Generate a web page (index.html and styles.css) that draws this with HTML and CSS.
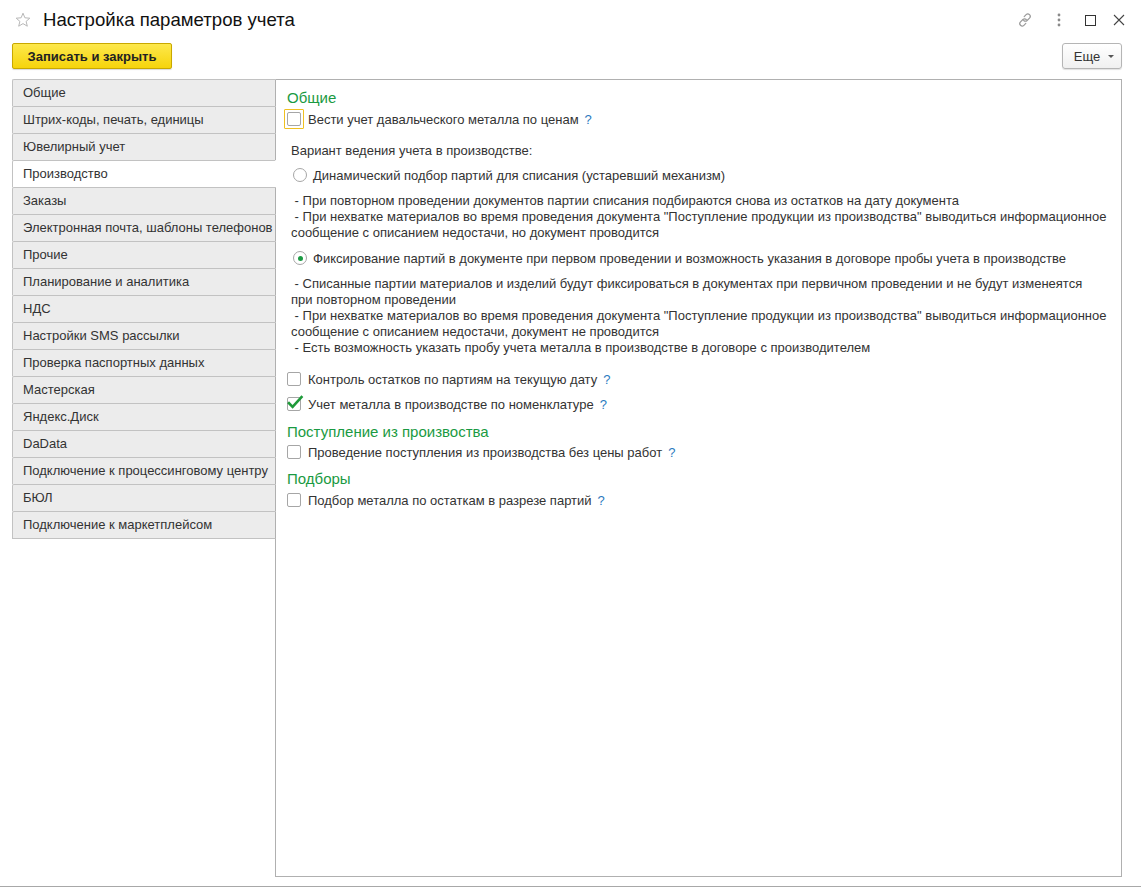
FILE: index.html
```html
<!DOCTYPE html>
<html lang="ru">
<head>
<meta charset="utf-8">
<title>Настройка параметров учета</title>
<link rel="stylesheet" href="styles.css">
</head>
<body>
<div class="window">
  <header class="titlebar">
    <svg class="star" width="16" height="16" viewBox="0 0 16 16"><path d="M8 1.2l1.9 4.6 4.9.4-3.7 3.2 1.2 4.8L8 11.6l-4.3 2.6 1.2-4.8L1.2 6.2l4.9-.4z" fill="none" stroke="#b8b8b8" stroke-width="1"/></svg>
    <h1 class="title">Настройка параметров учета</h1>
    <div class="win-icons">
      <svg class="ic-link" width="16" height="16" viewBox="0 0 16 16"><g fill="none" stroke="#9a9a9a" stroke-width="1.2" stroke-linecap="round"><path d="M7.2 4.6l1.9-1.9a2.4 2.4 0 0 1 3.4 3.4l-2.4 2.4a2.4 2.4 0 0 1-3.4 0"/><path d="M8.8 11.4l-1.9 1.9a2.4 2.4 0 0 1-3.4-3.4l2.4-2.4a2.4 2.4 0 0 1 3.4 0"/></g></svg>
      <svg class="ic-dots" width="4" height="14" viewBox="0 0 4 14"><circle cx="2" cy="2" r="1.4" fill="#8a8a8a"/><circle cx="2" cy="7" r="1.4" fill="#8a8a8a"/><circle cx="2" cy="12" r="1.4" fill="#8a8a8a"/></svg>
      <svg class="ic-max" width="11" height="11" viewBox="0 0 11 11"><rect x="0.5" y="0.5" width="10" height="10" fill="none" stroke="#333" stroke-width="1"/></svg>
      <svg class="ic-close" width="12" height="12" viewBox="0 0 12 12"><path d="M1 1l10 10M11 1L1 11" stroke="#444" stroke-width="1.1"/></svg>
    </div>
  </header>

  <div class="toolbar">
    <button class="btn-primary">Записать и закрыть</button>
    <button class="btn-more">Еще <span class="caret"></span></button>
  </div>

  <div class="main">
    <nav class="tabs">
      <div class="tab">Общие</div>
      <div class="tab">Штрих-коды, печать, единицы</div>
      <div class="tab">Ювелирный учет</div>
      <div class="tab active">Производство</div>
      <div class="tab">Заказы</div>
      <div class="tab">Электронная почта, шаблоны телефонов</div>
      <div class="tab">Прочие</div>
      <div class="tab">Планирование и аналитика</div>
      <div class="tab">НДС</div>
      <div class="tab">Настройки SMS рассылки</div>
      <div class="tab">Проверка паспортных данных</div>
      <div class="tab">Мастерская</div>
      <div class="tab">Яндекс.Диск</div>
      <div class="tab">DaData</div>
      <div class="tab">Подключение к процессинговому центру</div>
      <div class="tab">БЮЛ</div>
      <div class="tab last">Подключение к маркетплейсом</div>
      <div class="tab-filler"></div>
    </nav>

    <section class="panel">
      <div class="group-title g1">Общие</div>
      <div class="check-row r1">
        <span class="focus"><span class="cb"></span></span>
        <span class="label">Вести учет давальческого металла по ценам</span>
        <span class="help">?</span>
      </div>

      <div class="plain variant">Вариант ведения учета в производстве:</div>

      <div class="radio-row rad1">
        <span class="radio"></span>
        <span class="label">Динамический подбор партий для списания (устаревший механизм)</span>
      </div>
      <div class="desc d1">
        <div>&nbsp;- При повторном проведении документов партии списания подбираются снова из остатков на дату документа</div>
        <div>&nbsp;- При нехватке материалов во время проведения документа "Поступление продукции из производства" выводиться информационное</div>
        <div>сообщение с описанием недостачи, но документ проводится</div>
      </div>

      <div class="radio-row rad2">
        <span class="radio on"></span>
        <span class="label">Фиксирование партий в документе при первом проведении и возможность указания в договоре пробы учета в производстве</span>
      </div>
      <div class="desc d2">
        <div>&nbsp;- Списанные партии материалов и изделий будут фиксироваться в документах при первичном проведении и не будут изменеятся</div>
        <div>при повторном проведении</div>
        <div>&nbsp;- При нехватке материалов во время проведения документа "Поступление продукции из производства" выводиться информационное</div>
        <div>сообщение с описанием недостачи, документ не проводится</div>
        <div>&nbsp;- Есть возможность указать пробу учета металла в производстве в договоре с производителем</div>
      </div>

      <div class="check-row r2">
        <span class="cb"></span>
        <span class="label">Контроль остатков по партиям на текущую дату</span>
        <span class="help">?</span>
      </div>
      <div class="check-row r3">
        <span class="cb checked"><svg width="18" height="16" viewBox="0 0 18 16"><path d="M3 8.2l3.6 3.6L15.5 2" fill="none" stroke="#1f9a3a" stroke-width="2.6" stroke-linecap="square"/></svg></span>
        <span class="label">Учет металла в производстве по номенклатуре</span>
        <span class="help">?</span>
      </div>

      <div class="group-title g2">Поступление из произвоства</div>
      <div class="check-row r4">
        <span class="cb"></span>
        <span class="label">Проведение поступления из производства без цены работ</span>
        <span class="help">?</span>
      </div>

      <div class="group-title g3">Подборы</div>
      <div class="check-row r5">
        <span class="cb"></span>
        <span class="label">Подбор металла по остаткам в разрезе партий</span>
        <span class="help">?</span>
      </div>
    </section>
  </div>
  <div class="bottom-line"></div>
</div>
</body>
</html>
```

FILE: styles.css
```css
html, body {
  margin: 0;
  padding: 0;
  background: #fff;
}
body {
  font-family: Arial, "Liberation Sans", sans-serif;
  font-size: 13px;
  color: #333;
  width: 1141px;
  height: 890px;
  overflow: hidden;
}
.window {
  display: flex;
  flex-direction: column;
  height: 890px;
}

/* title bar */
.titlebar {
  height: 40px;
  display: flex;
  align-items: center;
  padding-left: 15px;
  padding-right: 16px;
}
.star {
  display: block;
  margin-top: -1px;
}
.title {
  margin: 0 0 0 12px;
  font-size: 18.6px;
  font-weight: normal;
  color: #111;
  line-height: 22px;
}
.win-icons {
  margin-left: auto;
  display: flex;
  align-items: center;
}
.ic-link { margin-right: 24px; }
.ic-dots { margin-right: 24px; }
.ic-max { margin-right: 17px; }

/* toolbar */
.toolbar {
  margin-top: 3px;
  height: 26px;
  display: flex;
  padding: 0 19px 0 12px;
}
.btn-primary {
  width: 160px;
  height: 26px;
  border: 1px solid #c9a800;
  border-radius: 2px;
  background: linear-gradient(#fde84c, #f6d40c);
  font-family: Arial, "Liberation Sans", sans-serif;
  font-weight: bold;
  font-size: 13px;
  color: #222;
  padding: 0;
  box-shadow: 0 1px 1px rgba(0,0,0,0.15);
}
.btn-more {
  margin-left: auto;
  width: 60px;
  height: 26px;
  border: 1px solid #b5b5b5;
  border-radius: 3px;
  background: linear-gradient(#ffffff, #f0f0f0);
  font-family: Arial, "Liberation Sans", sans-serif;
  font-size: 13px;
  color: #333;
  padding: 0 0 0 4px;
  display: flex;
  align-items: center;
  justify-content: center;
  box-shadow: 0 1px 1px rgba(0,0,0,0.12);
}
.caret {
  display: inline-block;
  margin-left: 8px;
  margin-top: 1px;
  border-left: 3px solid transparent;
  border-right: 3px solid transparent;
  border-top: 3px solid #555;
}

/* main area */
.main {
  margin-top: 10px;
  display: flex;
  height: 798px;
  padding: 0 19px 0 12px;
}
.tabs {
  width: 264px;
  display: flex;
  flex-direction: column;
}
.tab {
  height: 26px;
  line-height: 26px;
  box-sizing: content-box;
  padding-left: 10px;
  background: #ececec;
  border-top: 1px solid #c2c2c2;
  border-left: 1px solid #c2c2c2;
  border-right: 1px solid #b0b0b0;
  border-top-left-radius: 2px;
  color: #333;
  white-space: nowrap;
  overflow: hidden;
}
.tab.active {
  background: #fff;
  border-right-color: #fff;
}
.tab.last {
  border-bottom: 1px solid #c2c2c2;
}
.tab-filler {
  flex: 1;
  border-right: 1px solid #b0b0b0;
}
.panel {
  flex: 1;
  border-top: 1px solid #b0b0b0;
  border-right: 1px solid #b0b0b0;
  border-bottom: 1px solid #b0b0b0;
  padding: 8px 0 0 11px;
  display: flex;
  flex-direction: column;
  align-items: flex-start;
}

.group-title {
  font-size: 15px;
  line-height: 20px;
  color: #1a9a42;
}
.g2 { margin-top: 8px; }
.g3 { margin-top: 7px; }

.check-row {
  display: flex;
  align-items: center;
  height: 20px;
}
.r1 { height: 22px; }
.r2 { margin-top: 13px; }
.r3 { margin-top: 5px; }
.r5 { margin-top: 1px; }

.focus {
  display: flex;
  align-items: center;
  justify-content: center;
  width: 18px;
  height: 18px;
  margin-left: -3px;
  margin-right: -3px;
  border: 1px solid #f0c020;
  border-radius: 1px;
}
.cb {
  width: 12px;
  height: 12px;
  border: 1px solid #a6a6a6;
  border-radius: 2px;
  background: #fff;
  position: relative;
  flex: none;
}
.cb.checked svg {
  position: absolute;
  left: -2px;
  top: -3px;
}
.label {
  margin-left: 7px;
  white-space: nowrap;
}
.help {
  margin-left: 6px;
  color: #2b7bc0;
  font-weight: normal;
}

.plain {
  line-height: 16px;
}
.variant {
  margin-top: 13px;
  margin-left: 4px;
}

.radio-row {
  display: flex;
  align-items: center;
  height: 18px;
  margin-left: 6px;
}
.rad1 { margin-top: 7px; }
.rad2 { margin-top: 8px; }
.radio {
  width: 12px;
  height: 12px;
  border: 1px solid #a6a6a6;
  border-radius: 50%;
  background: #fff;
  display: flex;
  align-items: center;
  justify-content: center;
  flex: none;
}
.radio.on::after {
  content: "";
  width: 5px;
  height: 5px;
  border-radius: 50%;
  background: #1a9a42;
}
.radio-row .label { margin-left: 6px; }

.desc {
  margin-left: 4px;
  line-height: 16px;
  white-space: nowrap;
}
.d1 { margin-top: 9px; }
.d2 { margin-top: 9px; }

.bottom-line {
  margin-top: 9px;
  height: 1px;
  background: #a8a8a8;
}
```
